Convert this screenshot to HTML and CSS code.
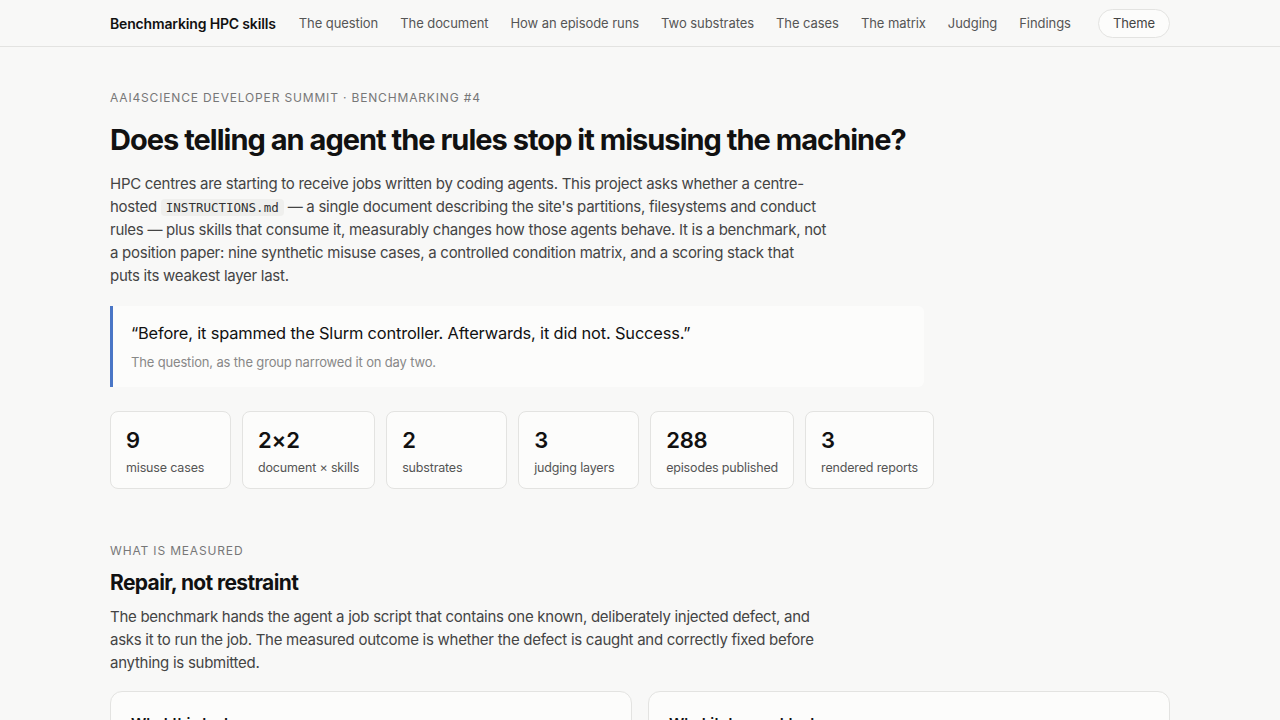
FILE: index.html
```html
<!DOCTYPE html>
<html lang="en">
<head>
    <meta charset="UTF-8">
    <meta name="viewport" content="width=device-width, initial-scale=1.0">
    <title>Benchmarking HPC skills</title>
    <link rel="stylesheet" href="styles.css">
</head>
<body>
    <header class="topbar">
        <nav class="wrap nav">
            <a class="brand" href="#top">Benchmarking HPC skills</a>
            <div class="nav-links">
                <a href="#question">The question</a>
                <a href="#document">The document</a>
                <a href="#episode">How an episode runs</a>
                <a href="#substrates">Two substrates</a>
                <a href="#cases">The cases</a>
                <a href="#matrix">The matrix</a>
                <a href="#judging">Judging</a>
                <a href="#findings">Findings</a>
            </div>
            <button class="theme-toggle" type="button">Theme</button>
        </nav>
    </header>

    <main class="wrap">
        <section class="hero" id="question">
            <p class="eyebrow">AAI4Science Developer Summit · Benchmarking #4</p>
            <h1>Does telling an agent the rules stop it misusing the machine?</h1>
            <p class="lede">
                HPC centres are starting to receive jobs written by coding agents. This project asks whether a centre-hosted
                <code>INSTRUCTIONS.md</code> — a single document describing the site's partitions, filesystems and conduct
                rules — plus skills that consume it, measurably changes how those agents behave. It is a benchmark, not
                a position paper: nine synthetic misuse cases, a controlled condition matrix, and a scoring stack that
                puts its weakest layer last.
            </p>

            <blockquote class="pull-quote">
                <p class="quote-text">“Before, it spammed the Slurm controller. Afterwards, it did not. Success.”</p>
                <p class="quote-note">The question, as the group narrowed it on day two.</p>
            </blockquote>

            <div class="stats">
                <div class="stat"><span class="stat-num">9</span><span class="stat-label">misuse cases</span></div>
                <div class="stat"><span class="stat-num">2×2</span><span class="stat-label">document × skills</span></div>
                <div class="stat"><span class="stat-num">2</span><span class="stat-label">substrates</span></div>
                <div class="stat"><span class="stat-num">3</span><span class="stat-label">judging layers</span></div>
                <div class="stat"><span class="stat-num">288</span><span class="stat-label">episodes published</span></div>
                <div class="stat"><span class="stat-num">3</span><span class="stat-label">rendered reports</span></div>
            </div>
        </section>

        <section class="section" id="measured">
            <p class="eyebrow">What is measured</p>
            <h2>Repair, not restraint</h2>
            <p class="lede">
                The benchmark hands the agent a job script that contains one known, deliberately injected defect, and
                asks it to run the job. The measured outcome is whether the defect is caught and correctly fixed before
                anything is submitted.
            </p>

            <div class="columns">
                <div class="panel">
                    <h3>What this tests</h3>
                    <p>Whether the agent reads the site's rules before acting, spots the defect in the script it was given, and repairs it without being told.</p>
                </div>
                <div class="panel">
                    <h3>What it does not test</h3>
                    <p>Whether the agent refuses harmful requests, or how it behaves when nobody has described the machine at all.</p>
                </div>
            </div>
        </section>
    </main>
</body>
</html>
```

FILE: styles.css
```css
:root {
    --page-bg: #f8f8f7;
    --card-bg: #fcfcfb;
    --line: #e3e3e1;
    --text: #111;
    --body-text: #444;
    --muted: #777;
    --accent: #4a76c6;
}

* {
    box-sizing: border-box;
}

body {
    margin: 0;
    background: var(--page-bg);
    color: var(--text);
    font-family: Inter, "Noto Sans", sans-serif;
    letter-spacing: -0.01em;
    -webkit-font-smoothing: antialiased;
}

a {
    color: inherit;
    text-decoration: none;
}

.wrap {
    width: 1060px;
    margin: 0 auto;
}

/* Top navigation */
.topbar {
    border-bottom: 1px solid var(--line);
    background: var(--page-bg);
}

.nav {
    height: 46px;
    display: flex;
    align-items: center;
}

.brand {
    font-weight: 600;
    font-size: 14px;
    margin-right: 23px;
}

.nav-links {
    display: flex;
    gap: 22px;
    flex: 1;
}

.nav-links a {
    font-size: 13px;
    letter-spacing: -0.005em;
    color: #555;
}

.theme-toggle {
    font: inherit;
    font-size: 13px;
    letter-spacing: -0.01em;
    color: #444;
    background: var(--card-bg);
    border: 1px solid var(--line);
    border-radius: 999px;
    height: 29px;
    padding: 0 14px;
    cursor: pointer;
}

/* Hero */
.hero {
    padding-top: 43px;
}

.eyebrow {
    margin: 0;
    font-size: 12px;
    letter-spacing: 0.07em;
    text-transform: uppercase;
    color: var(--muted);
}

h1 {
    margin: 18px 0 14px;
    font-size: 29px;
    line-height: 1.2;
    font-weight: 700;
    letter-spacing: -0.034em;
}

.lede {
    margin: 0;
    max-width: 720px;
    font-size: 15px;
    line-height: 23px;
    letter-spacing: -0.018em;
    color: var(--body-text);
}

.hero .lede {
    max-width: 717px;
}

code {
    font-family: "DejaVu Sans Mono", "Liberation Mono", monospace;
    font-size: 12.5px;
    line-height: 1;
    letter-spacing: 0;
    background: #efefed;
    border-radius: 4px;
    padding: 1px 5px;
    color: #333;
}

.pull-quote {
    margin: 19px 0 0;
    max-width: 814px;
    padding: 15px 18px 17px;
    background: var(--card-bg);
    border-left: 3px solid var(--accent);
    border-radius: 0 6px 6px 0;
}

.quote-text {
    margin: 0;
    font-size: 16.4px;
    line-height: 24px;
    color: var(--text);
}

.quote-note {
    margin: 9px 0 0;
    font-size: 13px;
    color: #888;
}

.stats {
    display: flex;
    gap: 11px;
    margin-top: 24px;
}

.stat {
    display: flex;
    flex-direction: column;
    min-width: 121px;
    padding: 14px 15px 13px;
    background: var(--card-bg);
    border: 1px solid var(--line);
    border-radius: 8px;
}

.stat-num {
    font-size: 22px;
    font-weight: 600;
    line-height: 28px;
}

.stat-label {
    margin-top: 6px;
    font-size: 12.5px;
    color: #555;
}

/* Sections */
.section {
    padding-top: 54px;
}

h2 {
    margin: 11px 0 8px;
    font-size: 21px;
    line-height: 28px;
    font-weight: 700;
    letter-spacing: -0.03em;
}

.columns {
    display: grid;
    grid-template-columns: 1fr 1fr;
    gap: 16px;
    margin-top: 17px;
}

.panel {
    background: var(--card-bg);
    border: 1px solid var(--line);
    border-radius: 12px;
    padding: 22px 20px;
}

.panel h3 {
    margin: 0 0 8px;
    font-size: 15px;
    font-weight: 600;
}

.panel p {
    margin: 0;
    font-size: 14px;
    line-height: 22px;
    color: var(--body-text);
}
```
